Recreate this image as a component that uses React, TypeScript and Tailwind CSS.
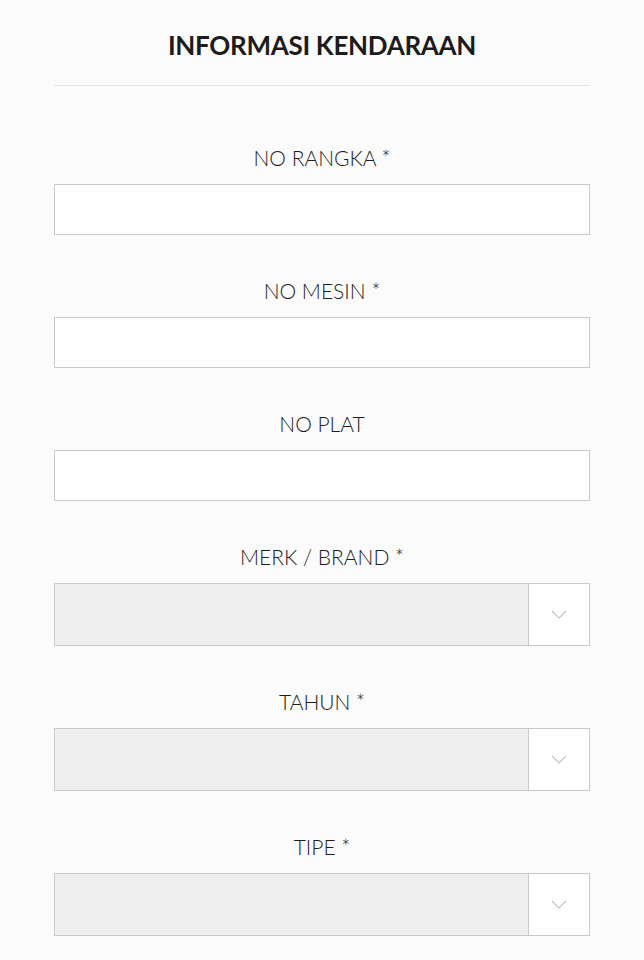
const fields = [
  { label: 'NO RANGKA *', type: 'input' },
  { label: 'NO MESIN *', type: 'input' },
  { label: 'NO PLAT', type: 'input' },
  { label: 'MERK / BRAND *', type: 'select' },
  { label: 'TAHUN *', type: 'select' },
  { label: 'TIPE *', type: 'select' },
]

function Chevron() {
  return (
    <svg width="16" height="9" viewBox="0 0 16 9" fill="none">
      <path d="M1 1l7 7 7-7" stroke="#c4c4c4" strokeWidth="1.2" />
    </svg>
  )
}

export default function App() {
  return (
    <div
      className="min-h-[960px] w-[644px] bg-[#fbfbfb] px-[54px] text-[#1e1e1e]"
      style={{ fontFamily: 'Lato, "Noto Sans", sans-serif' }}
    >
      <h1 className="pt-[29px] text-center text-[26px] font-bold leading-[32px] tracking-[-0.3px] text-[#1c1c1c]">
        INFORMASI KENDARAAN
      </h1>
      <div className="mt-[24px] h-px bg-[#e2e2e2]" />

      <form className="mt-[59px] flex flex-col gap-[43px]">
        {fields.map(f => (
          <div key={f.label}>
            <label className="block text-center text-[21px] font-light leading-[26px] text-[#1e1e1e]">
              {f.label}
            </label>
            {f.type === 'input' ? (
              <input
                type="text"
                className="mt-[13px] block h-[51px] w-full border border-[#c9c9c9] bg-white px-3 outline-none"
              />
            ) : (
              <div className="mt-[13px] flex h-[63px] w-full border border-[#c9c9c9] bg-[#efefef]">
                <div className="flex-1" />
                <div className="flex w-[61px] items-center justify-center border-l border-[#c9c9c9] bg-white">
                  <Chevron />
                </div>
              </div>
            )}
          </div>
        ))}
      </form>
    </div>
  )
}
